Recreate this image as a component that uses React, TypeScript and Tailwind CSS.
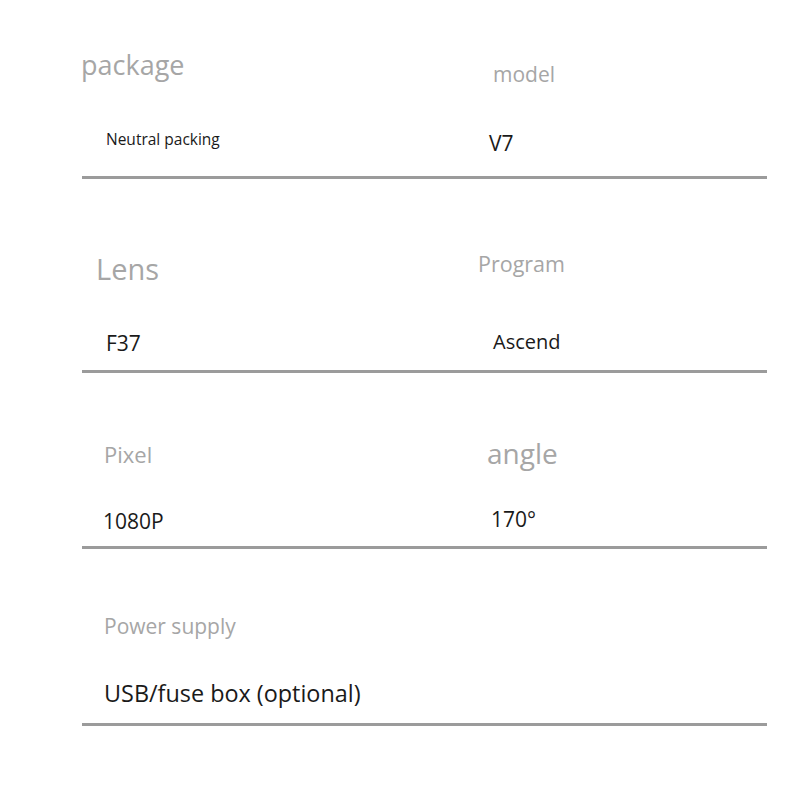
import React from "react";

const font = { fontFamily: '"Open Sans", "Noto Sans", sans-serif' };

export default function App() {
  return (
    <div className="w-[800px] h-[800px] bg-white" style={font}>
      <div className="pl-[82px] w-[767px] flex flex-col">
        {/* Row 1 */}
        <div className="h-[176px] flex">
          <div className="w-[396px] flex flex-col items-start">
            <div className="mt-[51px] ml-[-1px] text-[27px] leading-none text-[#a6a6a6]">package</div>
            <div className="mt-[54px] ml-[24px] text-[15.5px] leading-none text-[#1a1a1a]">Neutral packing</div>
          </div>
          <div className="flex flex-col items-start">
            <div className="mt-[64px] ml-[15px] text-[21px] leading-none text-[#a6a6a6]">model</div>
            <div className="mt-[48px] ml-[11px] text-[21px] leading-none text-[#1a1a1a]">V7</div>
          </div>
        </div>
        <div className="h-[3px] bg-[#9b9b9b]" />

        {/* Row 2 */}
        <div className="h-[191px] flex">
          <div className="w-[396px] flex flex-col items-start">
            <div className="mt-[75px] ml-[14px] text-[29px] leading-none text-[#a6a6a6]">Lens</div>
            <div className="mt-[50px] ml-[24px] text-[21px] leading-none text-[#1a1a1a]">F37</div>
          </div>
          <div className="flex flex-col items-start">
            <div className="mt-[74px] ml-[0px] text-[21.5px] leading-none text-[#a6a6a6]">Program</div>
            <div className="mt-[57px] ml-[15px] text-[20px] leading-none text-[#1a1a1a]">Ascend</div>
          </div>
        </div>
        <div className="h-[3px] bg-[#9b9b9b]" />

        {/* Row 3 */}
        <div className="h-[173px] flex">
          <div className="w-[396px] flex flex-col items-start">
            <div className="mt-[70px] ml-[22px] text-[22px] leading-none text-[#a6a6a6]">Pixel</div>
            <div className="mt-[46px] ml-[21px] text-[21px] leading-none text-[#1a1a1a]">1080P</div>
          </div>
          <div className="flex flex-col items-start">
            <div className="mt-[66px] ml-[9px] text-[28px] leading-none text-[#a6a6a6]">angle</div>
            <div className="mt-[42px] ml-[13px] text-[21px] leading-none text-[#1a1a1a]">170°</div>
          </div>
        </div>
        <div className="h-[3px] bg-[#9b9b9b]" />

        {/* Row 4 */}
        <div className="h-[174px] flex">
          <div className="flex flex-col items-start">
            <div className="mt-[67px] ml-[22px] text-[21px] leading-none text-[#a6a6a6]">Power supply</div>
            <div className="mt-[45px] ml-[22px] text-[23.4px] leading-none text-[#1a1a1a]">USB/fuse box (optional)</div>
          </div>
        </div>
        <div className="h-[3px] bg-[#9b9b9b]" />
      </div>
    </div>
  );
}
